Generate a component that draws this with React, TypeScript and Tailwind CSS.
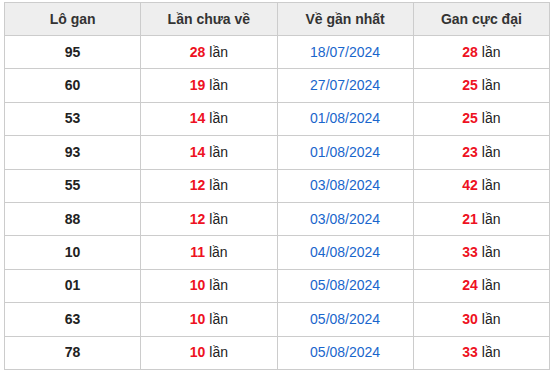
const rows = [
  { so: "95", chua: 28, ngay: "18/07/2024", max: 28 },
  { so: "60", chua: 19, ngay: "27/07/2024", max: 25 },
  { so: "53", chua: 14, ngay: "01/08/2024", max: 25 },
  { so: "93", chua: 14, ngay: "01/08/2024", max: 23 },
  { so: "55", chua: 12, ngay: "03/08/2024", max: 42 },
  { so: "88", chua: 12, ngay: "03/08/2024", max: 21 },
  { so: "10", chua: 11, ngay: "04/08/2024", max: 33 },
  { so: "01", chua: 10, ngay: "05/08/2024", max: 24 },
  { so: "63", chua: 10, ngay: "05/08/2024", max: 30 },
  { so: "78", chua: 10, ngay: "05/08/2024", max: 33 },
];

function Lan({ n }: { n: number }) {
  return (
    <>
      <span className="font-bold text-[#ee1122]">{n}</span>{" "}
      <span className="text-[#222]">lần</span>
    </>
  );
}

export default function App() {
  return (
    <div className="bg-white pl-[4px] pt-[2px] font-['Liberation_Sans',Arial,sans-serif] text-[14px]">
      <table className="w-[546px] table-fixed border-collapse text-center">
        <thead>
          <tr className="h-[33px] bg-[#eeeeee]">
            <th className="border border-[#cccccc] p-0 font-bold text-[#333]">Lô gan</th>
            <th className="border border-[#cccccc] p-0 font-bold text-[#333]">Lần chưa về</th>
            <th className="border border-[#cccccc] p-0 font-bold text-[#333]">Về gần nhất</th>
            <th className="border border-[#cccccc] p-0 font-bold text-[#333]">Gan cực đại</th>
          </tr>
        </thead>
        <tbody>
          {rows.map((r) => (
            <tr key={r.so} className="h-[33.4px]">
              <td className="border border-[#cccccc] p-0 font-bold text-[#222]">{r.so}</td>
              <td className="border border-[#cccccc] p-0">
                <Lan n={r.chua} />
              </td>
              <td className="border border-[#cccccc] p-0 text-[#1a66cc]">{r.ngay}</td>
              <td className="border border-[#cccccc] p-0">
                <Lan n={r.max} />
              </td>
            </tr>
          ))}
        </tbody>
      </table>
    </div>
  );
}
